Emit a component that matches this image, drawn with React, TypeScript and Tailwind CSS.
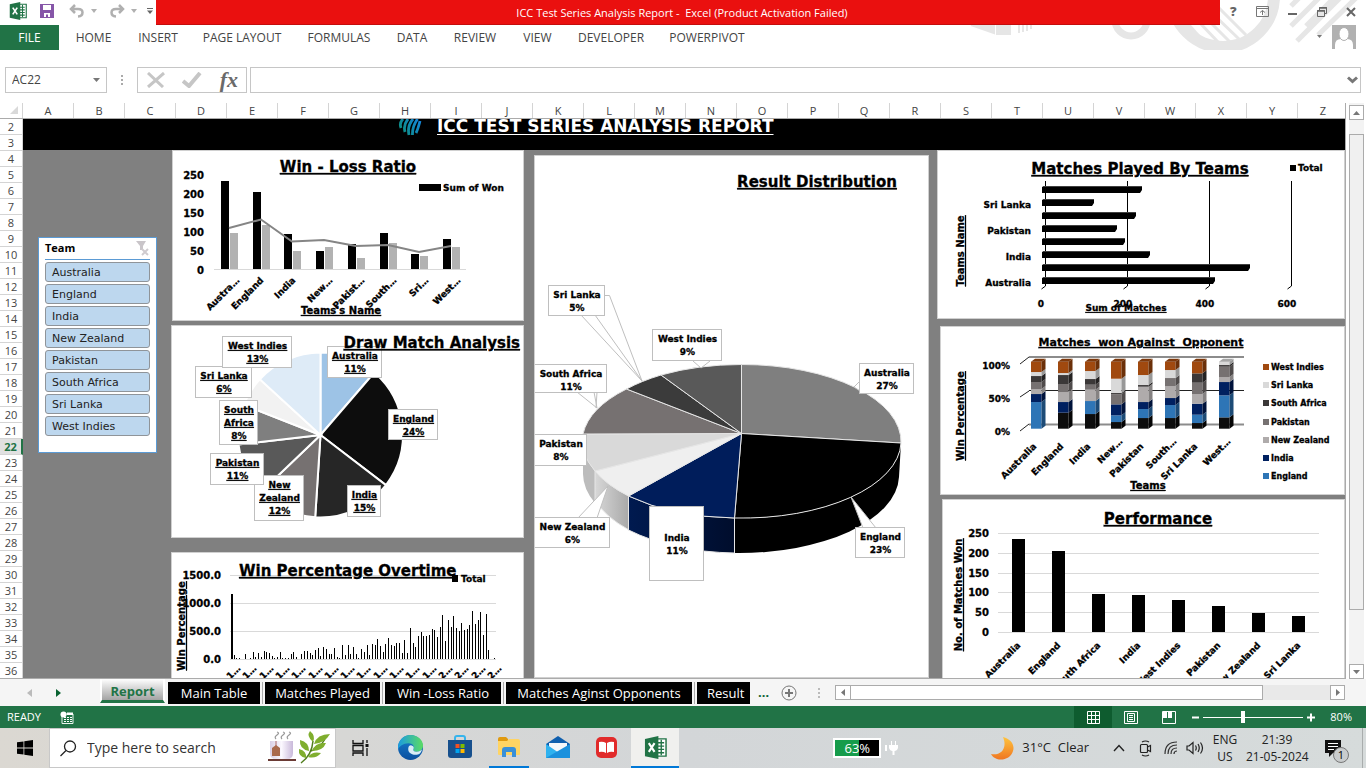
import React from "react";

const ribbonTabs = [
  { name: "HOME", width: "w-[65px]" },
  { name: "INSERT", width: "w-[64px]" },
  { name: "PAGE LAYOUT", width: "w-[104px]" },
  { name: "FORMULAS", width: "w-[90px]" },
  { name: "DATA", width: "w-[56px]" },
  { name: "REVIEW", width: "w-[70px]" },
  { name: "VIEW", width: "w-[55px]" },
  { name: "DEVELOPER", width: "w-[92px]" },
  { name: "POWERPIVOT", width: "w-[100px]" },
];

const columns = "ABCDEFGHIJKLMNOPQRSTUVWXYZ".split("");
const rows = Array.from({ length: 35 }, (_, i) => i + 2);
const teams = ["Australia", "England", "India", "New Zealand", "Pakistan", "South Africa", "Sri Lanka", "West Indies"];

type LabelProps = {
  x: number;
  y: number;
  children: React.ReactNode;
  size?: 8 | 9 | 10 | 11 | 15;
  anchor?: "start" | "middle" | "end";
  underline?: boolean;
  rotate?: number;
};

const sizes = { 8: "text-[8px]", 9: "text-[9px]", 10: "text-[10px]", 11: "text-[11px]", 15: "text-[15px]" };

function Label({ x, y, children, size = 9, anchor = "middle", underline = false, rotate }: LabelProps) {
  return (
    <text
      x={x}
      y={y}
      textAnchor={anchor}
      transform={rotate ? `rotate(${rotate} ${x} ${y})` : undefined}
      className={`${sizes[size]} fill-black stroke-black [stroke-width:0.3px] font-bold whitespace-pre ${underline ? "underline underline-offset-2" : ""}`}
    >
      {children}
    </text>
  );
}

function Callout({ x, y, w, h, lines, underline = false, top = 10 }: { x: number; y: number; w: number; h: number; lines: string[]; underline?: boolean; top?: number }) {
  return (
    <g>
      <rect x={x + 0.5} y={y + 0.5} width={w} height={h} fill="#fff" stroke="#bfbfbf" />
      {lines.map((line, i) => (
        <Label key={line} x={x + w / 2 + 1} y={y + top + 3 + i * 13} underline={underline}>
          {line}
        </Label>
      ))}
    </g>
  );
}

function WinLossChart() {
  const won = [181, 192, 234, 251, 244, 233, 254, 239];
  const lost = [233, 225, 251, 247, 258, 243, 256, 247];
  const names = ["Austra…", "England", "India", "New…", "Pakist…", "South…", "Sri…", "West…"];
  const ends = [240, 264, 296, 333, 365, 397, 429, 461];
  return (
    <svg viewBox="173 151 350 169" width="350" height="169" role="img" aria-label="Win - Loss Ratio">
      <Label x={348} y={172} size={15} underline>Win - Loss Ratio</Label>
      <rect x="419" y="184" width="22" height="7" />
      <Label x={443} y={191} anchor="start">Sum of Won</Label>
      {[250, 200, 150, 100, 50, 0].map((v, i) => (
        <Label key={v} x={204} y={179 + i * 19} size={10} anchor="end">{v}</Label>
      ))}
      <path d="M214 269.5H466" stroke="#d9d9d9" />
      <g shapeRendering="crispEdges">
        {won.map((t, i) => <rect key={i} x={221 + Math.round(i * 31.7)} y={t} width="8" height={269 - t} />)}
        {lost.map((t, i) => <rect key={i} x={230 + Math.round(i * 31.7)} y={t} width="8" height={269 - t} fill="#b2b2b2" />)}
      </g>
      <path d="M229 228L261 219.500L292 241.500L324 240L356 246L388 245L419 252L451 246" fill="none" stroke="#858585" strokeWidth="2" />
      {names.map((n, i) => <Label key={n} x={ends[i]} y={281} anchor="end" rotate={-45}>{n}</Label>)}
      <Label x={341} y={314} size={10} underline>Teams's Name</Label>
    </svg>
  );
}

function DrawChart() {
  const cx = 320.5, cy = 435, r = 82.5;
  const stops = [0, 40.7, 127.4, 183.7, 226.3, 263.4, 291.4, 312.6, 360];
  const fills = ["#9dc3e6", "#0d0d0d", "#262626", "#767171", "#595959", "#7f7f7f", "#f2f2f2", "#deebf7"];
  const at = (deg: number) => {
    const a = (deg * Math.PI) / 180;
    return `${(cx + r * Math.sin(a)).toFixed(1)} ${(cy - r * Math.cos(a)).toFixed(1)}`;
  };
  return (
    <svg viewBox="172 326 351 211" width="351" height="211" role="img" aria-label="Draw Match Analysis">
      {fills.map((f, i) => (
        <path key={f} d={`M${cx} ${cy}L${at(stops[i])}A${r} ${r} 0 0 1 ${at(stops[i + 1])}Z`} fill={f} stroke="#fff" strokeWidth="2" />
      ))}
      <Callout x={195} y={366} w={56} h={31} lines={["Sri Lanka", "6%"]} underline />
      <Callout x={222} y={336} w={69} h={31} lines={["West Indies", "13%"]} underline />
      <Callout x={219} y={400} w={38} h={44} lines={["South", "Africa", "8%"]} underline />
      <Callout x={254} y={475} w={49} h={45} lines={["New", "Zealand", "12%"]} underline />
      <Callout x={210} y={453} w={53} h={31} lines={["Pakistan", "11%"]} underline />
      <Callout x={347} y={485} w={33} h={31} lines={["India", "15%"]} underline />
      <Callout x={388} y={409} w={49} h={30} lines={["England", "24%"]} underline />
      <Callout x={327} y={346} w={54} h={31} lines={["Australia", "11%"]} underline />
      <Label x={520} y={348} size={15} anchor="end" underline>Draw Match Analysis</Label>
    </svg>
  );
}

const yearly = [
  195, 12, 3, 3, 0, 15, 0, 3, 21, 6, 18, 6, 24, 21, 18, 9, 3, 6, 21, 2, 2, 2, 15, 21, 6, 0, 15, 24, 24, 18, 12, 27, 33, 9, 36,
  30, 15, 15, 33, 6, 3, 42, 12, 42, 15, 36, 15, 3, 30, 21, 42, 12, 45, 42, 60, 39, 21, 45, 63, 42, 39, 48, 48, 18, 57, 18, 93,
  48, 36, 69, 81, 69, 69, 72, 90, 87, 66, 96, 132, 54, 117, 96, 129, 93, 84, 108, 87, 90, 102, 144, 105, 117, 141, 72, 135, 27,
  0, 4,
];

function OvertimeChart() {
  return (
    <svg viewBox="172 553 351 126" width="351" height="126" role="img" aria-label="Win Percentage Overtime">
      {[575.5, 603.5, 631.5, 659.5].map((y) => <path key={y} d={`M230 ${y}H496`} stroke="#d9d9d9" />)}
      {["1500.0", "1000.0", "500.0", "0.0"].map((v, i) => (
        <Label key={v} x={221} y={579 + i * 28} size={10} anchor="end">{v}</Label>
      ))}
      <g shapeRendering="crispEdges">
        {yearly.map((h, i) => (
          <rect key={i} x={Math.round(231 + i * 2.71)} y={659 - Math.round(h / 3)} width={i === 0 ? 2 : 1} height={Math.round(h / 3)} />
        ))}
      </g>
      <Label x={239} y={576} size={15} anchor="start" underline>Win Percentage Overtime</Label>
      <rect x="452" y="575" width="6" height="7" />
      <Label x={461} y={582} anchor="start">Total</Label>
      <Label x={185} y={626} size={10} rotate={-90} underline>Win Percentage</Label>
      {Array.from({ length: 17 }, (_, i) => (
        <Label key={i} x={241 + Math.round(i * 16.3)} y={669} anchor="end" rotate={-45}>{i < 13 ? "1…" : "2…"}</Label>
      ))}
    </svg>
  );
}

function ResultChart() {
  const edge = { stroke: "#e6e6e6", strokeWidth: 1, strokeLinejoin: "round" as const };
  const pointer = { fill: "#fff", stroke: "#bfbfbf" };
  return (
    <svg viewBox="535 156 392 522" width="392" height="522" role="img" aria-label="Result Distribution">
      <defs>
        <linearGradient id="navySide" x1="0" x2="1"><stop offset="0" stopColor="#001a50" /><stop offset="1" stopColor="#000d2c" /></linearGradient>
        <linearGradient id="paleSide" x1="0" x2="1"><stop offset="0" stopColor="#d8d8d8" /><stop offset="1" stopColor="#a8a8a8" /></linearGradient>
      </defs>
      <Label x={817} y={187} size={15} underline>Result Distribution</Label>
      <path d="M583 441V474A159 77 0 0 0 595 503V471A159 77 0 0 1 583 441Z" fill="#bcbcbc" />
      <path d="M595 471V500A159 78 0 0 0 629 530V496A159 77 0 0 1 595 471Z" fill="url(#paleSide)" {...edge} />
      <path d="M628.500 496V530A158 78 0 0 0 734.500 553V518A159 77 0 0 1 628.500 496Z" fill="url(#navySide)" {...edge} />
      <path d="M734.500 518V553A160 78 0 0 0 899 477L901 443A159 77 0 0 1 734.500 518Z" />
      <path d="M734.500 518V553" {...edge} />
      <path d="M741.500 433.500V364.500A159 77 0 0 1 901 443Z" fill="#7f7f7f" {...edge} />
      <path d="M741.500 433.500L901 443A159 77 0 0 1 734.500 518Z" fill="#000" {...edge} />
      <path d="M741.500 433.500L734.500 518A159 77 0 0 1 628.500 496Z" fill="#001d5b" {...edge} />
      <path d="M741.500 433.500L628.500 496A159 77 0 0 1 595 471Z" fill="#efefef" {...edge} />
      <path d="M741.500 433.500L595 471A159 77 0 0 1 583 434Z" fill="#d9d9d9" {...edge} />
      <path d="M741.500 433.500L583 434A159 77 0 0 1 626.500 389Z" fill="#767171" {...edge} />
      <path d="M741.500 433.500L626.500 389A159 77 0 0 1 661 375Z" fill="#3b3b3b" {...edge} />
      <path d="M741.500 433.500L661 375A159 77 0 0 1 741.500 364.500Z" fill="#595959" {...edge} />
      <path d="M604 295.500H609.500L642 381L595 315M581 315L642 381" fill="none" stroke="#bfbfbf" />
      <path d="M693 361L701 368L710 361" {...pointer} />
      <path d="M860 381L854 387L860 391" {...pointer} />
      <path d="M577 392L597 408L594 392M596 408L597 392" {...pointer} />
      <path d="M578 518L608 486L597 518" {...pointer} />
      <path d="M863 528L851 497L876 528" {...pointer} />
      <Callout x={548} y={285} w={56} h={30} lines={["Sri Lanka", "5%"]} />
      <Callout x={652} y={329} w={69} h={31} lines={["West Indies", "9%"]} />
      <Callout x={859} y={363} w={54} h={30} lines={["Australia", "27%"]} />
      <Callout x={534} y={364} w={72} h={28} lines={["South Africa", "11%"]} />
      <Callout x={534} y={434} w={52} h={31} lines={["Pakistan", "8%"]} />
      <Callout x={534} y={517} w={75} h={30} lines={["New Zealand", "6%"]} />
      <Callout x={649} y={506} w={54} h={74} lines={["India", "11%"]} top={32} />
      <Callout x={855} y={527} w={49} h={30} lines={["England", "23%"]} />
    </svg>
  );
}

function MatchesChart() {
  const ends = [1142, 1094, 1136, 1117, 1125, 1150, 1250, 1215];
  return (
    <svg viewBox="938 151 405 167" width="405" height="167" role="img" aria-label="Matches Played By Teams">
      <Label x={1140} y={174} size={15} underline>Matches Played By Teams</Label>
      <rect x="1290" y="165" width="6" height="6" />
      <Label x={1298} y={171} anchor="start">Total</Label>
      {[1045.5, 1127.5, 1209.5, 1291.5].map((x) => <path key={x} d={`M${x} 181V286L${x - 4} 289`} fill="none" stroke="#000" />)}
      {ends.map((e, i) => {
        const y = 186 + i * 13;
        return (
          <g key={e}>
            <path d={`M1042 ${y + 1}L1044 ${y}H${e}V${y + 4}L${e - 2} ${y + 7}H1042Z`} />
            <path d={`M1044 ${y + 0.5}H${e}`} stroke="#404040" />
          </g>
        );
      })}
      {["Sri Lanka", "Pakistan", "India", "Australia"].map((n, i) => <Label key={n} x={1031} y={208 + i * 26} anchor="end">{n}</Label>)}
      {[0, 200, 400, 600].map((n, i) => <Label key={n} x={1041 + i * 82} y={307}>{n}</Label>)}
      <Label x={1126} y={311} underline>Sum of Matches</Label>
      <Label x={964} y={251} size={10} rotate={-90} underline>Teams Name</Label>
    </svg>
  );
}

function OpponentChart() {
  const front = ["#0d0d0d", "#2e75b6", "#002060", "#afabab", "#767171", "#3b3838", "#d9d9d9", "#a0490f"];
  const side = ["#050505", "#1d4b76", "#00133b", "#858282", "#4f4b4b", "#242222", "#989898", "#6b3009"];
  const stacks = [
    [0, 80, 24, 15, 21, 18, 12, 31],
    [48, 0, 32, 30, 24, 27, 6, 34],
    [44, 39, 0, 34, 15, 17, 24, 28],
    [20, 20, 33, 0, 30, 4, 43, 51],
    [32, 27, 21, 46, 0, 5, 30, 40],
    [32, 39, 21, 36, 24, 0, 24, 25],
    [17, 25, 33, 29, 34, 28, 0, 35],
    [34, 66, 40, 15, 31, 5, 10, 0],
  ];
  const names = ["Australia", "England", "India", "New…", "Pakistan", "South…", "Sri Lanka", "West…"];
  const ends = [1037, 1064, 1091, 1123, 1144, 1177, 1198, 1231];
  const legend = ["West Indies", "Sri Lanka", "South Africa", "Pakistan", "New Zealand", "India", "England"];
  return (
    <svg viewBox="941 327 402 167" width="402" height="167" role="img" aria-label="Matches won Against Opponent">
      <Label x={1141} y={346} size={11} underline>{"Matches  won Against  Opponent"}</Label>
      <path d="M1029 357H1244M1029 424.500H1244" stroke="#8c8c8c" strokeWidth="2" />
      <path d="M1029 390.500H1244M1029 357L1020 364M1029 391L1020 397M1029 424L1020 431" stroke="#222" />
      {stacks.map((stack, i) => {
        const x = 1031 + Math.round(i * 26.8);
        let y = 428.7;
        return (
          <g key={i}>
            {stack.map((h, k) => {
              if (!h) return null;
              const low = y;
              y -= h / 3;
              return (
                <g key={k}>
                  <rect x={x} y={y} width="10.500" height={h / 3} fill={front[k]} />
                  <path d={`M${x + 10.5} ${low}V${y}l4 -3V${low - 3}Z`} fill={side[k]} />
                </g>
              );
            })}
            <path d={`M${x} 361.700l4 -3h10.500l-4 3Z`} fill={i === 7 ? "#a6a6a6" : "#7d390c"} />
          </g>
        );
      })}
      {["100%", "50%", "0%"].map((v, i) => <Label key={v} x={1010} y={369 + i * 33} anchor="end">{v}</Label>)}
      {names.map((n, i) => <Label key={n} x={ends[i]} y={n.endsWith("…") ? 442 : 447} anchor="end" rotate={-45}>{n}</Label>)}
      {legend.map((n, i) => (
        <g key={n}>
          <rect x="1263" y={364 + Math.round(i * 18.2)} width="6" height="6" fill={front[7 - i]} />
          <Label x={1271} y={370 + Math.round(i * 18.2)} size={8} anchor="start">{n}</Label>
        </g>
      ))}
      <Label x={1148} y={489} size={10} underline>Teams</Label>
      <Label x={964} y={416} size={10} rotate={-90} underline>Win Percentage</Label>
    </svg>
  );
}

function PerformanceChart() {
  const tops = [539, 551, 594, 595, 600, 606, 613, 616];
  const names = ["Australia", "England", "South Africa", "India", "West Indies", "Pakistan", "New Zealand", "Sri Lanka"];
  return (
    <svg viewBox="943 500 400 178" width="400" height="178" role="img" aria-label="Performance">
      <Label x={1158} y={524} size={15} underline>Performance</Label>
      {[250, 200, 150, 100, 50, 0].map((v, i) => (
        <g key={v}>
          <path d={`M998 ${533.5 + Math.round(i * 19.8)}H1319`} stroke="#d9d9d9" />
          <Label x={989} y={537 + Math.round(i * 19.8)} size={10} anchor="end">{v}</Label>
        </g>
      ))}
      {tops.map((t, i) => (
        <g key={i}>
          <rect x={1012 + i * 40} y={t} width="13" height={632 - t} />
          <Label x={1021 + i * 40} y={646} anchor="end" rotate={-45}>{names[i]}</Label>
        </g>
      ))}
      <Label x={962} y={595} size={10} rotate={-90} underline>No. of Matches Won</Label>
    </svg>
  );
}

function ExcelIcon({ size }: { size: number }) {
  return (
    <svg width={size} height={size} viewBox="0 0 24 24" aria-hidden="true">
      <path d="M13 3H23V21H13Z" fill="#fff" stroke="#217346" strokeWidth="1.500" />
      <path d="M14 7H21M14 10.500H21M14 14H21M14 17.500H21M18 4V20" stroke="#217346" strokeWidth="1.400" />
      <path d="M1 3L15 0V24L1 21Z" fill="#217346" />
      <path d="M5 7.500L11 16.500M11 7.500L5 16.500" stroke="#fff" strokeWidth="2.200" />
    </svg>
  );
}

function TitleBar() {
  return (
    <header className="flex h-[25px] shrink-0 items-stretch">
      <div className="flex w-[156px] shrink-0 items-center overflow-hidden pb-1 pl-[9px]">
        <ExcelIcon size={18} />
        <button aria-label="Save" className="ml-[13px]">
          <svg width="14" height="14" viewBox="0 0 14 14"><path d="M0 0H14V14H0Z" fill="#8656a8" /><path d="M3 1H11V6H3ZM4 9H10V13H8V10.500H6V13H4Z" fill="#fff" /></svg>
        </button>
        <button aria-label="Undo" className="ml-[15px] flex items-center gap-1.5">
          <svg width="16" height="14" viewBox="0 0 16 14" fill="none" stroke="#b0b0b0" strokeWidth="2.500"><path d="M6 1L2 5L6 9M2 5H9C15 5 15 12 9 12.500" /></svg>
          <svg width="6" height="4"><path d="M0 0H6L3 4Z" fill="#b0b0b0" /></svg>
        </button>
        <button aria-label="Redo" className="ml-3 flex items-center gap-1.5">
          <svg width="16" height="14" viewBox="0 0 16 14" fill="none" stroke="#b0b0b0" strokeWidth="2.500"><path d="M10 1L14 5L10 9M14 5H7C1 5 1 12 7 12.500" /></svg>
          <svg width="6" height="4"><path d="M0 0H6L3 4Z" fill="#b0b0b0" /></svg>
        </button>
        <button aria-label="Customize Quick Access Toolbar" className="ml-2.5">
          <svg width="6" height="6"><path d="M0 0.500H6" stroke="#666" /><path d="M0 2.500H6L3 6Z" fill="#666" /></svg>
        </button>
      </div>
      <h1 className="flex-1 truncate border-b border-[#c40d0d] bg-[#ea100f] pr-3 text-center text-[11px] leading-[25px] whitespace-pre text-white">
        {"ICC Test Series Analysis Report -  Excel (Product Activation Failed)"}
      </h1>
      <div className="flex w-[146px] shrink-0 items-center justify-between pr-2.5 pb-0.5 pl-2.5 text-[#666]">
        <button aria-label="Help" className="text-[13px] leading-none font-extrabold">?</button>
        <button aria-label="Ribbon Display Options">
          <svg width="13" height="11" fill="none" stroke="#777"><path d="M0.500 0.500H12.500V10.500H0.500ZM1 2.500H12M6.500 9V4.500M4 6.500L6.500 4.500L9 6.500" /></svg>
        </button>
        <button aria-label="Minimize"><svg width="9" height="11"><path d="M0 8H9" stroke="#666" strokeWidth="2" /></svg></button>
        <button aria-label="Restore Down">
          <svg width="10" height="10" fill="none" stroke="#666"><path d="M2.500 3V0.500H9.500V6.500H7.500M0.500 3.500H7.500V9.500H0.500Z" /><path d="M0 4H8M2 1H10" strokeWidth="1.500" /></svg>
        </button>
        <button aria-label="Close"><svg width="10" height="10"><path d="M1 1L9 9M9 1L1 9" stroke="#666" strokeWidth="2" /></svg></button>
      </div>
    </header>
  );
}

function Ribbon() {
  return (
    <nav className="flex h-[25px] shrink-0 items-stretch text-xs text-[#444]">
      <button className="w-[59px] shrink-0 bg-[#217346] text-white">FILE</button>
      <div className="ml-0.5 flex flex-1">
        {ribbonTabs.map((t) => <button key={t.name} className={`${t.width} shrink-0 text-center whitespace-nowrap`}>{t.name}</button>)}
      </div>
      <button aria-label="Account" className="mr-2.5 flex items-start gap-2.5">
        <svg width="5" height="14"><path d="M0 10H5L2.500 13Z" fill="#777" /></svg>
        <svg width="24" height="24" viewBox="0 0 24 24"><rect width="24" height="24" fill="#b1b1b1" /><path d="M3 24V20Q3 14 9 14H15Q21 14 21 20V24Z" fill="#fff" /><ellipse cx="12" cy="9" rx="5" ry="6.500" fill="#fff" stroke="#b1b1b1" /></svg>
      </button>
    </nav>
  );
}

function FormulaBar() {
  return (
    <div className="mx-[5px] mt-[17px] flex h-[26px] shrink-0 items-stretch">
      <div className="flex w-[102px] items-center border border-[#c6c6c6]">
        <input aria-label="Name Box" defaultValue="AC22" className="w-20 bg-transparent pl-1.5 text-xs text-[#444] outline-none" />
        <button aria-label="Open name list" className="ml-[7px]"><svg width="7" height="4"><path d="M0 0H7L3.500 4Z" fill="#777" /></svg></button>
      </div>
      <svg width="30" height="26" className="shrink-0" fill="#aaa"><path d="M14 8h2v2h-2zM14 12h2v2h-2zM14 16h2v2h-2z" /></svg>
      <div className="flex w-[110px] items-center justify-between border border-[#c6c6c6] pr-2 pl-[9px]">
        <button aria-label="Cancel"><svg width="18" height="16" viewBox="0 0 18 16"><path d="M1 1L16 15M17 1L1 15" stroke="#c6c6c6" strokeWidth="3" /></svg></button>
        <button aria-label="Enter"><svg width="20" height="16" viewBox="0 0 20 16"><path d="M1 9L7 14L18 1" fill="none" stroke="#c6c6c6" strokeWidth="4" /></svg></button>
        <button aria-label="Insert Function" className="font-['Liberation_Serif',serif] text-[22px] leading-none font-bold text-[#6a6a6a] italic">fx</button>
      </div>
      <div className="ml-[3px] flex flex-1 items-center border border-[#c6c6c6] pr-0.5">
        <input aria-label="Formula Bar" className="h-full flex-1 bg-transparent px-2 text-xs outline-none" />
        <button aria-label="Expand Formula Bar"><svg width="11" height="8"><path d="M1 1.500L5.500 5.500L10 1.500" fill="none" stroke="#777" strokeWidth="3" /></svg></button>
      </div>
    </div>
  );
}

function Slicer() {
  return (
    <section aria-label="Team" className="mt-[87px] ml-[15px] h-[216px] w-[119px] shrink-0 border border-[#5b9bd5] bg-white px-1.5 text-[11px] text-[#222]">
      <div className="flex h-[22px] items-center justify-between border-b border-[#5b9bd5]">
        <h2 className="font-bold text-black">Team</h2>
        <button aria-label="Clear Filter">
          <svg width="15" height="15"><path d="M1 0H11L8 5V9H5V5Z" fill="#c9c5c9" /><path d="M7 8L13 14M13 8L7 14" stroke="#cfcbcf" strokeWidth="2" /></svg>
        </button>
      </div>
      <div className="mt-0.5 flex flex-col gap-0.5">
        {teams.map((t) => (
          <button key={t} className="h-5 rounded-[3px] border border-[#8f9499] bg-[#bdd7ee] pl-1.5 text-left font-['DejaVu_Sans',sans-serif] leading-none">{t}</button>
        ))}
      </div>
    </section>
  );
}

function Sheet() {
  const panel = "shrink-0 overflow-hidden border border-[#d0d0d0] bg-white font-['DejaVu_Sans',sans-serif]";
  return (
    <main className="mt-2.5 flex min-h-0 flex-1">
      <div className="flex min-w-0 flex-1 flex-col overflow-hidden border-r border-b border-[#ababab]">
        <div className="flex h-4 shrink-0 border-b border-[#ababab] text-[11px] leading-[15px] text-[#444]">
          <div className="flex w-[23px] shrink-0 items-end justify-end border-r border-[#d4d4d4] pr-1 pb-1"><svg width="8" height="8"><path d="M8 0V8H0Z" fill="#d9d9d9" /></svg></div>
          {columns.map((c) => <div key={c} className="w-[51px] shrink-0 border-r border-[#d4d4d4] text-center">{c}</div>)}
        </div>
        <div className="flex min-h-0 flex-1">
          <div className="w-[23px] shrink-0 overflow-hidden text-center text-[11px] leading-[15px] text-[#444]">
            {rows.map((r) => (
              <div key={r} className={r === 22 ? "h-4 border-r-2 border-b border-[#217346] border-b-[#d4d4d4] bg-[#e1e1e1] font-bold text-[#217346]" : "h-4 border-r border-b border-[#d4d4d4]"}>{r}</div>
            ))}
          </div>
          <div className="flex min-w-0 flex-1 flex-col overflow-hidden bg-[#808080]">
            <div className="flex h-[31px] shrink-0 items-start bg-black pl-[375px]">
              <svg width="24" height="17" viewBox="0 0 24 17" fill="none">
                <defs><linearGradient id="globe" x1="0" x2="24" y1="17" y2="0" gradientUnits="userSpaceOnUse"><stop stopColor="#0a8f6c" /><stop offset="1" stopColor="#1585e6" /></linearGradient></defs>
                <path d="M5 0Q1 4 3 9M10 0Q5 6 7 13M15 0Q9 7 11 16M19.500 0Q14 8 14.500 16M22 2Q20 10 18 14" stroke="url(#globe)" strokeWidth="2.800" />
              </svg>
              <h2 className="ml-[15px] font-['DejaVu_Sans',sans-serif] text-[17px] leading-[15px] font-bold whitespace-nowrap text-white underline underline-offset-2">ICC TEST SERIES ANALYSIS REPORT</h2>
            </div>
            <div className="flex min-h-0 flex-1">
              <Slicer />
              <div className="ml-3.5 flex w-[353px] shrink-0 flex-col">
                <section className={`${panel} ml-px h-[171px]`}><WinLossChart /></section>
                <section className={`${panel} mt-1 h-[213px]`}><DrawChart /></section>
                <section className={`${panel} mt-3.5 h-[140px]`}><OvertimeChart /></section>
              </div>
              <section className={`${panel} mt-[5px] ml-2.5 w-[395px]`}><ResultChart /></section>
              <div className="ml-[8px] flex min-w-0 flex-1 flex-col">
                <section className={`${panel} h-[169px]`}><MatchesChart /></section>
                <section className={`${panel} mt-[7px] ml-[3px] h-[169px]`}><OpponentChart /></section>
                <section className={`${panel} mt-1 ml-[5px] h-[190px]`}><PerformanceChart /></section>
              </div>
            </div>
          </div>
        </div>
      </div>
      <div className="mr-0.5 ml-[3px] flex w-[15px] shrink-0 flex-col bg-[#f3f3f3] pt-0.5">
        <button aria-label="Scroll up" className="flex h-[15px] items-center justify-center border border-[#ababab] bg-white"><svg width="7" height="4"><path d="M0 4H7L3.500 0Z" fill="#777" /></svg></button>
        <div className="mt-3.5 h-[476px] border border-[#ababab] bg-[#f0f0f0]" />
        <button aria-label="Scroll down" className="mt-auto flex h-[15px] items-center justify-center border border-[#ababab] bg-white"><svg width="7" height="4"><path d="M0 0H7L3.500 4Z" fill="#777" /></svg></button>
      </div>
    </main>
  );
}

function SheetTabs() {
  const tabs = [
    { name: "Main Table", width: "w-[92px]" },
    { name: "Matches Played", width: "w-[115px]" },
    { name: "Win -Loss Ratio", width: "w-[116px]" },
    { name: "Matches Aginst Opponents", width: "w-[186px]" },
  ];
  return (
    <div className="flex h-[27px] shrink-0 items-center bg-[#f5f5f5] text-[13px]">
      <div className="flex w-[100px] shrink-0 items-center gap-6 pl-[27px]">
        <button aria-label="Previous sheets"><svg width="5" height="8"><path d="M5 0V8L0 4Z" fill="#bbb" /></svg></button>
        <button aria-label="Next sheets"><svg width="5" height="8"><path d="M0 0V8L5 4Z" fill="#0a6332" /></svg></button>
      </div>
      <button className="h-6 w-[65px] shrink-0 self-start border-2 border-t-0 border-b-[3px] border-white border-b-[#217346] bg-linear-to-b from-white to-[#a3a3a3] pt-1 leading-[17px] font-bold text-[#217346]">Report</button>
      <div className="ml-[3px] flex shrink-0 items-center gap-0.5">
        {tabs.map((t) => (
          <React.Fragment key={t.name}>
            <button className={`${t.width} h-[22px] shrink-0 bg-black leading-[20px] whitespace-nowrap text-white`}>{t.name}</button>
            <span className="h-[22px] w-px bg-[#ababab]" />
          </React.Fragment>
        ))}
        <button className="h-[22px] w-[53px] shrink-0 overflow-hidden bg-black pl-2.5 text-left leading-[20px] text-white">Result</button>
      </div>
      <span className="ml-2 font-bold text-[#0a6332]">…</span>
      <button aria-label="New sheet" className="ml-3"><svg width="16" height="16" fill="none" stroke="#777"><circle cx="8" cy="8" r="7" /><path d="M4 8H12M8 4V12" strokeWidth="2" /></svg></button>
      <svg width="38" height="16" className="shrink-0" fill="#bbb"><path d="M21 3h2v2h-2zM21 7h2v2h-2zM21 11h2v2h-2z" /></svg>
      <div className="mr-[21px] flex h-[15px] flex-1 bg-[#e9e9e9]">
        <button aria-label="Scroll left" className="flex w-4 items-center justify-center border border-[#ababab] bg-white"><svg width="4" height="7"><path d="M4 0V7L0 3.500Z" fill="#777" /></svg></button>
        <div className="-ml-px w-[81%] border border-[#ababab] bg-white" />
        <button aria-label="Scroll right" className="ml-auto flex w-[15px] items-center justify-center border border-[#ababab] bg-white"><svg width="4" height="7"><path d="M0 0V7L4 3.500Z" fill="#777" /></svg></button>
      </div>
    </div>
  );
}

function StatusBar() {
  return (
    <footer className="flex h-[22px] shrink-0 items-center bg-[#217346] text-[11px] text-white">
      <span className="pl-[7px]">READY</span>
      <button aria-label="Record Macro" className="ml-[19px]">
        <svg width="14" height="13"><path d="M2 3H13V12.500H2Z" fill="none" stroke="#e8f3ec" /><path d="M7 1.500H13V4H7ZM4 6h2v1H4zM7 6h2v1H7zM10 6h2v1h-2zM4 8h2v1H4zM7 8h2v1H7zM10 8h2v1h-2zM4 10h2v1H4zM7 10h2v1H7zM10 10h2v1h-2z" fill="#fff" /><circle cx="3.500" cy="3.500" r="3" fill="#fff" /></svg>
      </button>
      <div className="ml-auto flex items-center">
        <button aria-label="Normal" className="flex h-[22px] w-[38px] items-center justify-center bg-[#0e5c2f]"><svg width="13" height="13" fill="none" stroke="#fff"><path d="M0.500 0.500H12.500V12.500H0.500ZM4.500 0V13M8.500 0V13M0 4.500H13M0 8.500H13" /></svg></button>
        <button aria-label="Page Layout" className="flex w-[38px] items-center justify-center"><svg width="14" height="13" fill="none" stroke="#fff"><path d="M0.500 0.500H13.500V12.500H0.500ZM3.500 2.500H10.500V10.500H3.500ZM5 4.500H9M5 6.500H9M5 8.500H9" /></svg></button>
        <button aria-label="Page Break Preview" className="flex w-[38px] items-center justify-center"><svg width="14" height="13"><path d="M0.500 0.500H13.500V12.500H0.500Z" fill="none" stroke="#fff" /><path d="M1 0H5V7H1ZM6 0H10V7H6Z" fill="#fff" /></svg></button>
        <button aria-label="Zoom out" className="ml-1"><svg width="7" height="9"><path d="M0 4.500H7" stroke="#fff" strokeWidth="2" /></svg></button>
        <input
          type="range"
          aria-label="Zoom"
          min={10}
          max={160}
          defaultValue={70}
          className="mx-1 h-3 w-[100px] appearance-none bg-[linear-gradient(#fff,#fff)] bg-size-[100%_1px] bg-center bg-no-repeat [&::-webkit-slider-thumb]:h-3 [&::-webkit-slider-thumb]:w-1 [&::-webkit-slider-thumb]:appearance-none [&::-webkit-slider-thumb]:bg-white"
        />
        <button aria-label="Zoom in"><svg width="8" height="9"><path d="M0 4.500H8M4 0.500V8.500" stroke="#fff" strokeWidth="2" /></svg></button>
        <span className="w-[51px] pr-3.5 text-right">80%</span>
      </div>
    </footer>
  );
}

function Taskbar() {
  const app = "flex w-[49px] shrink-0 items-center justify-center border-b-2";
  return (
    <footer className="flex h-10 shrink-0 items-stretch bg-linear-to-r from-[#dbd8d2] via-[#d3d6d8] to-[#d6dbdb] text-[#222]">
      <button aria-label="Start" className="flex w-[49px] shrink-0 items-center justify-center"><svg width="16" height="16" viewBox="0 0 16 16"><path d="M0 2.300L6.500 1.400V7.600H0ZM7.300 1.300L16 0V7.600H7.300ZM0 8.400H6.500V14.600L0 13.700ZM7.300 8.400H16V16L7.300 14.700Z" /></svg></button>
      <label className="flex w-[287px] shrink-0 items-center border border-[#c8c8c8] bg-white pl-2.5">
        <svg width="17" height="17" className="shrink-0" fill="none" stroke="#222" strokeWidth="1.300"><circle cx="10" cy="6.500" r="5.500" /><path d="M6 10.500L0.500 16" /></svg>
        <input aria-label="Search" placeholder="Type here to search" className="ml-2.5 w-[181px] bg-transparent pb-px text-sm outline-none placeholder:text-[#333]" />
        <svg width="64" height="34" className="shrink-0" viewBox="0 0 64 34">
          <defs><linearGradient id="cup" x1="0" x2="1"><stop stopColor="#d9cfe6" /><stop offset=".5" stopColor="#fbf8ff" /><stop offset="1" stopColor="#c9b9da" /></linearGradient></defs>
          <path d="M8 8Q6 6 9 4T9 1M14 8Q12 6 15 4T15 1M20 8Q18 6 21 4T21 1" fill="none" stroke="#999" strokeWidth="1.300" />
          <path d="M2 10H25V22Q25 28 19 28H8Q2 28 2 22Z" fill="url(#cup)" />
          <path d="M0 28H28V30H0Z" fill="#6b3b35" /><path d="M8 10V15" stroke="#a66" /><path d="M4 17L8 14L12 17V25H4Z" fill="#a9694d" />
          <path d="M33 32Q44 24 45 10M43 20Q52 17 57 8" fill="none" stroke="#517e1e" strokeWidth="1.500" />
          <path d="M45 11Q38 5 42 0Q48 5 45 11ZM46 13Q49 3 62 3Q57 12 46 13ZM44 20Q47 11 58 12Q55 20 44 20ZM41 20Q31 18 32 9Q41 11 41 20ZM38 27Q30 26 31 18Q39 20 38 27ZM40 26Q44 20 53 22Q48 28 40 26Z" fill="#7fae2e" />
        </svg>
      </label>
      <button aria-label="Task View" className="flex w-[48px] shrink-0 items-center justify-center"><svg width="17" height="16" fill="none" stroke="#111" strokeWidth="1.300"><path d="M1 0V3.500H11V0M1 5.500H11V11H1ZM1 16V13H11V16M15 0V3M15 8V16" /><path d="M13.500 4H16.500V7H13.500Z" fill="#111" stroke="none" /></svg></button>
      <button aria-label="Microsoft Edge" className={`${app} ml-0.5 border-transparent`}>
        <svg width="25" height="25" viewBox="0 0 24 24">
          <defs><linearGradient id="edgeA" x1="0" x2="1"><stop stopColor="#1a9be0" /><stop offset="1" stopColor="#5bdc63" /></linearGradient><linearGradient id="edgeB" x1="0" x2="0" y1="0" y2="1"><stop stopColor="#1680d0" /><stop offset="1" stopColor="#0b4f9e" /></linearGradient></defs>
          <circle cx="12" cy="12" r="12" fill="url(#edgeB)" />
          <path d="M0 11C1 4 6 0 12 0C19 0 24 5 24 10C24 14 21 16 18 16C15 16 14 15 15 13C16 11 14 8 10 8C5 8 1 11 0 14Z" fill="url(#edgeA)" />
          <path d="M15 13C14 15 15 16 18 16C20 16 22 15 23 14C22 18 20 19 17 19C12 19 9 16 10 12C10.500 10 12 9.500 13 10C15 10.500 15.500 12 15 13Z" fill="#d8ecf5" />
        </svg>
      </button>
      <button aria-label="Microsoft Store" className={`${app} border-transparent`}>
        <svg width="24" height="24" viewBox="0 0 24 24"><path d="M7 6V3Q7 1 9 1H15Q17 1 17 3V6" fill="none" stroke="#35b4ec" strokeWidth="2" /><path d="M0 5H24V20Q24 23 21 23H3Q0 23 0 20Z" fill="#17508d" /><path d="M7.500 9H11.500V13H7.500Z" fill="#f25022" /><path d="M12.500 9H16.500V13H12.500Z" fill="#7fba00" /><path d="M7.500 14H11.500V18H7.500Z" fill="#00a4ef" /><path d="M12.500 14H16.500V18H12.500Z" fill="#ffb900" /></svg>
      </button>
      <button aria-label="File Explorer" className={`${app} border-transparent bg-[linear-gradient(#0078d7,#0078d7)] bg-size-[40px_2px] bg-bottom bg-no-repeat bg-origin-border`}>
        <svg width="22" height="20" viewBox="0 0 22 20"><path d="M0 2Q0 0 2 0H8L10 2V6H0Z" fill="#e09a10" /><path d="M0 4H9L11 2H20Q22 2 22 4V17Q22 18 21 18H1Q0 18 0 17Z" fill="#ffd463" /><path d="M4 20V13Q4 10 7 10H15Q18 10 18 13V20H14V15H8V20Z" fill="#3a90d8" /></svg>
      </button>
      <button aria-label="Mail" className={`${app} border-transparent`}>
        <svg width="24" height="22" viewBox="0 0 24 22"><path d="M0 8L12 0L24 8V12H0Z" fill="#0f5fae" /><path d="M3 7H21V12L12 16L3 12Z" fill="#f4f7fa" /><path d="M0 8L13 17L24 22H0Z" fill="#2fb2ef" /><path d="M24 8V22L0 22Z" fill="#1b91dd" /></svg>
      </button>
      <button aria-label="Reader" className={`${app} border-transparent`}>
        <svg width="21" height="21" viewBox="0 0 21 21"><rect width="21" height="21" rx="5" fill="#e12b2b" /><path d="M3 5Q7 4 10 6V16Q7 14 3 15ZM18 5Q14 4 11 6V16Q14 14 18 15Z" fill="#fff" /></svg>
      </button>
      <button aria-label="Excel" className="flex w-12 shrink-0 items-center justify-center border-b-2 border-[#0078d7] bg-[#f0f0ee]"><ExcelIcon size={23} /></button>
      <div className="ml-auto flex items-center">
        <div className="flex h-5 w-12 items-center justify-center border-2 border-white bg-linear-to-r from-[#169c4b] from-55% to-black to-55% text-[13px] leading-none text-white">63%</div>
        <svg width="16" height="18" className="ml-1" fill="#fff"><path d="M0 6H2V12H0ZM6 2H7V6H6ZM10 2H11V6H10ZM4 6H13V9Q12 12 9.500 12V16H7.500V12Q5 12 4 9Z" /></svg>
        <button className="ml-[90px] flex items-center text-[13px] whitespace-pre">
          <svg width="23" height="23" viewBox="0 0 23 23"><defs><linearGradient id="moon" x1="0" x2="0" y1="0" y2="1"><stop stopColor="#ffc43d" /><stop offset="1" stopColor="#ef7622" /></linearGradient></defs><path d="M12 0C20 2 24 8 22 14C20 21 12 24 6 22C3 21 1 19 0 17C9 19 17 12 12 0Z" fill="url(#moon)" /></svg>
          <span className="ml-2">{"31°C  Clear"}</span>
        </button>
        <button aria-label="Show hidden icons" className="ml-6"><svg width="12" height="8" fill="none" stroke="#222" strokeWidth="1.400"><path d="M1 7L6 1.500L11 7" /></svg></button>
        <svg width="13" height="17" className="ml-3.5" fill="none" stroke="#222" strokeWidth="1.200"><path d="M3 2Q6.500 0 10 2M3 15Q6.500 17 10 15" /><rect x="1.500" y="4.500" width="7" height="8" rx="1" /><path d="M8.500 7L11.500 5.500V11.500L8.500 10" /></svg>
        <svg width="14" height="14" className="ml-3" fill="none" stroke="#333" strokeWidth="1.200"><path d="M1 13Q1 1 13 1M4 13Q4 4 13 4M7 13Q7 7 13 7M10 13Q10 10 13 10" /></svg>
        <svg width="18" height="14" className="ml-2" fill="none" stroke="#222" strokeWidth="1.200"><path d="M1 5H3L7 1.500V12.500L3 9H1ZM9.500 4.500Q11 7 9.500 9.500M12 3Q14.500 7 12 11M14.500 1.500Q18.500 7 14.500 12.500" /></svg>
        <div className="ml-2 w-[26px] text-center text-xs leading-[17px]">ENG<br />US</div>
        <div className="ml-2 w-[62px] text-center text-xs leading-[17px] whitespace-nowrap">21:39<br />21-05-2024</div>
        <button aria-label="Notifications" className="mt-2 ml-[17px]"><svg width="25" height="26"><path d="M0 1H16V14H8L4 18V14H0Z" fill="#111" /><path d="M3 4.500H13M3 7.500H13M3 10.500H9" stroke="#fff" /><circle cx="16" cy="16" r="7.500" fill="#c9cccd" stroke="#777" /><text x="16" y="20" textAnchor="middle" className="fill-black text-[11px]">1</text></svg></button>
        <span className="ml-3 h-10 w-[4px] border-l border-[#a9adad]" />
      </div>
    </footer>
  );
}

export default function App() {
  return (
    <div className="relative isolate flex h-screen min-h-0 flex-col overflow-hidden bg-white font-['Open_Sans','Noto_Sans',sans-serif]">
      <svg width="400" height="50" viewBox="0 0 400 50" fill="none" stroke="#e6e6e6" className="absolute top-0 right-0 -z-10" aria-hidden="true">
        <path d="M5 25L28 33V25M31 25V34H44V25M53 25V33M57 25V32M61 25V31M65 25V29" fill="#e6e6e6" strokeWidth="2" />
        <circle cx="165" cy="20" r="16" strokeWidth="7" />
        <circle cx="257" cy="-4" r="51" strokeWidth="12" />
        <path d="M213 25L229 43M223 25L239 43M233 22L253 43M240 18L264 42M247 14L273 39M253 8L280 35" strokeWidth="3" />
        <path d="M325 6L333 -2M325 26L353 -2M340 26L368 -2M331 41L374 -2M352 35L390 -2" strokeWidth="5" />
      </svg>
      <TitleBar />
      <Ribbon />
      <FormulaBar />
      <Sheet />
      <SheetTabs />
      <StatusBar />
      <Taskbar />
    </div>
  );
}
